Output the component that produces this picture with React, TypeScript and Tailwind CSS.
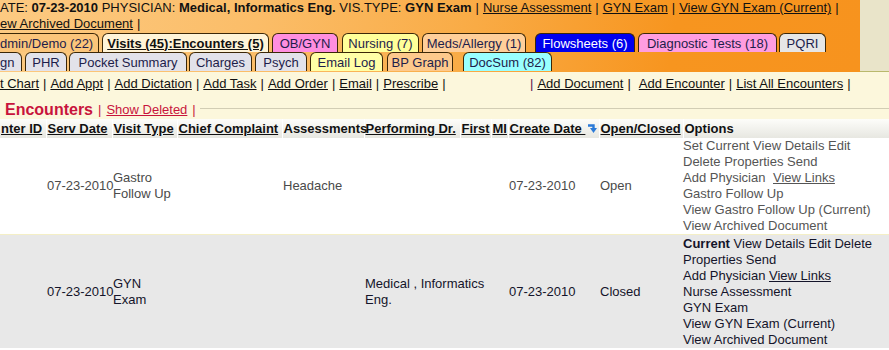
import React from 'react'

const TAB =
  'h-[19px] shrink-0 flex items-center justify-center border border-b-0 border-[#3b2707] rounded-t-[6px] text-[13px] leading-none whitespace-nowrap'

const topTabs = [
  { label: 'dmin/Demo (22)', cls: 'w-[99px] !justify-start border-l-0 rounded-tl-none bg-[#fbc57a] text-[#1d1d4a]' },
  { label: 'Visits (45):Encounters (5)', cls: 'ml-[3px] w-[167px] bg-[#fff4d8] text-[#111] font-bold underline' },
  { label: 'OB/GYN', cls: 'ml-[3px] w-[66px] bg-[#ff8ee0] text-[#1d1d4a]' },
  { label: 'Nursing (7)', cls: 'ml-[4px] w-[77px] bg-[#ffff99] text-[#1d1d4a]' },
  { label: 'Meds/Allergy (1)', cls: 'ml-[3px] w-[104px] bg-[#ffcf9a] text-[#1d1d4a]' },
  { label: 'Flowsheets (6)', cls: 'ml-[9px] w-[100px] bg-[#0000ee] text-white' },
  { label: 'Diagnostic Tests (18)', cls: 'ml-[3px] w-[139px] bg-[#ff9de0] text-[#1d1d4a]' },
  { label: 'PQRI', cls: 'ml-[2px] w-[47px] bg-[#e6e6e6] text-[#1d1d4a]' },
]

const bottomTabs = [
  { label: 'gn', cls: 'w-[22px] !justify-start border-l-0 rounded-tl-none bg-[#e2e2ea] text-[#1d1d4a]' },
  { label: 'PHR', cls: 'ml-[3px] w-[42px] bg-[#e2e2ea] text-[#1d1d4a]' },
  { label: 'Pocket Summary', cls: 'ml-[2px] w-[118px] bg-[#e2e2ea] text-[#1d1d4a]' },
  { label: 'Charges', cls: 'ml-[2px] w-[63px] bg-[#e2e2ea] text-[#1d1d4a]' },
  { label: 'Psych', cls: 'ml-[3px] w-[52px] bg-[#e2e2ea] text-[#1d1d4a]' },
  { label: 'Email Log', cls: 'ml-[3px] w-[73px] bg-[#ffffa6] text-[#1d1d4a]' },
  { label: 'BP Graph', cls: 'ml-[4px] w-[66px] bg-[#fdc98c] text-[#1d1d4a]' },
  { label: 'DocSum (82)', cls: 'ml-[10px] w-[89px] bg-[#99ffff] text-[#1d1d4a]' },
]

const leftLinks = ['Add Appt', 'Add Dictation', 'Add Task', 'Add Order', 'Email', 'Prescribe']

function Sep({ className = '' }: { className?: string }) {
  return <span className={`mx-[4px] no-underline ${className}`}>|</span>
}

function SortIcon() {
  return (
    <svg width="11" height="11" viewBox="0 0 11 11" className="inline-block ml-[2px] align-[-1px]">
      <path d="M1 2.5 H6.5 V6" fill="none" stroke="#2b7ad8" strokeWidth="2.4" />
      <polygon points="3,5 10,5 6.5,10" fill="#2b7ad8" />
    </svg>
  )
}

const TH = 'h-[19px] px-[1px] py-0 text-left align-middle font-bold text-[13px] leading-[19px] text-[#111] border-r border-white whitespace-nowrap'
const TD = 'px-[1px] align-middle whitespace-nowrap'

export default function App() {
  return (
    <div className="w-[889px] h-[350px] overflow-hidden bg-white font-['Liberation_Sans',Arial,sans-serif] text-[13px] text-[#111]">
      {/* patient header + tabs */}
      <div className="flex h-[72px] bg-[#e9e4c9]">
        <div className="w-[860px] shrink-0 bg-[linear-gradient(100deg,#fcca82_0%,#fbbd68_30%,#f9ab45_55%,#f7951f_78%,#f7931e_100%)]">
          <div className="h-[33px] leading-[16px]">
            <div className="whitespace-nowrap">
              ATE: <b>07-23-2010</b> PHYSICIAN: <b>Medical, Informatics Eng.</b> VIS.TYPE: <b>GYN Exam</b>
              <Sep />
              <span className="underline">Nurse Assessment</span>
              <Sep />
              <span className="underline">GYN Exam</span>
              <Sep />
              <span className="underline">View GYN Exam (Current)</span>
              <Sep />
            </div>
            <div className="whitespace-nowrap">
              <span className="underline">ew Archived Document</span>
              <Sep />
            </div>
          </div>
          <div className="flex">
            {topTabs.map((t) => (
              <div key={t.label} className={`${TAB} ${t.cls}`}>
                {t.label}
              </div>
            ))}
          </div>
          <div className="flex">
            {bottomTabs.map((t) => (
              <div key={t.label} className={`${TAB} ${t.cls}`}>
                {t.label}
              </div>
            ))}
          </div>
        </div>
      </div>

      {/* action links */}
      <div className="bg-[#fcf7dc] border-t border-[#b9b86c] -mt-px">
        <div className="flex items-center h-[24px] whitespace-nowrap">
          <div className="w-[530px] shrink-0">
            <span className="underline">t Chart</span>
            {leftLinks.map((l) => (
              <React.Fragment key={l}>
                <Sep />
                <span className="underline">{l}</span>
              </React.Fragment>
            ))}
            <Sep />
          </div>
          <div>
            <span className="mr-[4px] text-[#5b1650]">|</span>
            <span className="underline">Add Document</span>
            <Sep />
            <span className="ml-[4px] underline">Add Encounter</span>
            <Sep />
            <span className="underline">List All Encounters</span>
            <Sep />
          </div>
        </div>

        <div className="flex items-center h-[23px] pt-[4px] whitespace-nowrap">
          <span className="ml-[5px] text-[16px] font-bold text-[#c8143c]">Encounters</span>
          <span className="ml-[5px] text-[#c8143c]">|</span>
          <span className="ml-[5px] text-[#c8143c] underline">Show Deleted</span>
          <span className="ml-[5px] text-[#c8143c]">|</span>
          <div className="ml-[4px] flex-1 h-px bg-[#d2cdb4] mb-[3px]" />
        </div>
      </div>

      {/* encounters table */}
      <table className="table-fixed border-collapse w-[889px]">
        <colgroup>
          <col className="w-[46px]" />
          <col className="w-[66px]" />
          <col className="w-[65px]" />
          <col className="w-[105px]" />
          <col className="w-[82px]" />
          <col className="w-[96px]" />
          <col className="w-[31px]" />
          <col className="w-[17px]" />
          <col className="w-[91px]" />
          <col className="w-[84px]" />
          <col className="w-[206px]" />
        </colgroup>
        <thead>
          <tr className="bg-[linear-gradient(#fdfdfa,#e7e7e1)]">
            <th className={TH}><span className="underline">nter ID</span></th>
            <th className={TH}><span className="underline">Serv Date</span></th>
            <th className={TH}><span className="underline">Visit Type</span></th>
            <th className={TH}><span className="underline">Chief Complaint</span></th>
            <th className={TH}>Assessments</th>
            <th className={TH}><span className="underline">Performing Dr.</span></th>
            <th className={TH}><span className="underline">First</span></th>
            <th className={TH}><span className="underline">MI</span></th>
            <th className={TH}><span className="underline">Create Date </span><SortIcon /></th>
            <th className={TH}><span className="underline">Open/Closed</span></th>
            <th className={TH}>Options</th>
          </tr>
        </thead>
        <tbody className="leading-[16px]">
          <tr className="bg-white text-[#4a4a4a]">
            <td />
            <td className={TD}>07-23-2010</td>
            <td className={TD}>Gastro<br />Follow Up</td>
            <td />
            <td className={TD}>Headache</td>
            <td colSpan={3} />
            <td className={TD}>07-23-2010</td>
            <td className={TD}>Open</td>
            <td className="p-0 align-top whitespace-nowrap text-[#555]">
              <div>Set Current View Details Edit</div>
              <div>Delete Properties Send</div>
              <div>
                Add Physician <span className="ml-[4px] underline">View Links</span>
              </div>
              <div>Gastro Follow Up</div>
              <div>View Gastro Follow Up (Current)</div>
              <div>View Archived Document</div>
            </td>
          </tr>
          <tr className="bg-[#e8e8e8] text-[#14142a] border-t border-[#f4efc6]">
            <td />
            <td className={TD}>07-23-2010</td>
            <td className={TD}>GYN<br />Exam</td>
            <td />
            <td />
            <td colSpan={3} className={TD}>Medical , Informatics<br />Eng.</td>
            <td className={TD}>07-23-2010</td>
            <td className={TD}>Closed</td>
            <td className="p-0 pt-[1px] align-top whitespace-nowrap">
              <div><b>Current</b> View Details Edit Delete</div>
              <div>Properties Send</div>
              <div>
                Add Physician <span className="underline">View Links</span>
              </div>
              <div>Nurse Assessment</div>
              <div>GYN Exam</div>
              <div>View GYN Exam (Current)</div>
              <div>View Archived Document</div>
            </td>
          </tr>
        </tbody>
      </table>
    </div>
  )
}
